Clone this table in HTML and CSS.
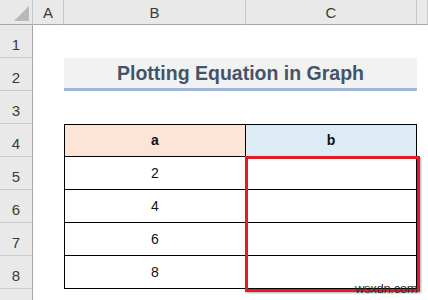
FILE: index.html
```html
<!DOCTYPE html>
<html lang="en">
<head>
    <meta charset="UTF-8">
    <title>Plotting Equation in Graph</title>
    <link rel="stylesheet" href="styles.css">
</head>
<body>
    <div class="sheet">
        <!-- column headers -->
        <div class="corner"><span class="corner-mark"></span></div>
        <div class="col-head">A</div>
        <div class="col-head">B</div>
        <div class="col-head">C</div>
        <div class="col-head"></div>

        <!-- row 1 -->
        <div class="row-head">1</div>
        <div class="cell"></div><div class="cell"></div><div class="cell"></div><div class="cell"></div>

        <!-- row 2: title merged over B:C -->
        <div class="row-head">2</div>
        <div class="cell"></div>
        <div class="title">Plotting Equation in Graph</div>
        <div class="cell"></div>

        <!-- row 3 -->
        <div class="row-head">3</div>
        <div class="cell"></div><div class="cell"></div><div class="cell"></div><div class="cell"></div>

        <!-- row 4: table header -->
        <div class="row-head">4</div>
        <div class="cell"></div>
        <div class="cell tbl tbl-first tbl-top head-a">a</div>
        <div class="cell tbl tbl-top head-b">b</div>
        <div class="cell"></div>

        <div class="row-head">5</div>
        <div class="cell"></div>
        <div class="cell tbl tbl-first">2</div>
        <div class="cell tbl"></div>
        <div class="cell"></div>

        <div class="row-head">6</div>
        <div class="cell"></div>
        <div class="cell tbl tbl-first">4</div>
        <div class="cell tbl"></div>
        <div class="cell"></div>

        <div class="row-head">7</div>
        <div class="cell"></div>
        <div class="cell tbl tbl-first">6</div>
        <div class="cell tbl"></div>
        <div class="cell"></div>

        <div class="row-head">8</div>
        <div class="cell"></div>
        <div class="cell tbl tbl-first">8</div>
        <div class="cell tbl"></div>
        <div class="cell"></div>

        <div class="row-head"></div>
        <div class="cell"></div><div class="cell"></div><div class="cell"></div><div class="cell"></div>

        <!-- highlight over C5:C8 -->
        <div class="highlight"></div>
        <div class="watermark">wsxdn.com</div>
    </div>
</body>
</html>
```

FILE: styles.css
```css
body {
    margin: 0;
    background: #fff;
    font-family: "Liberation Sans", Arial, sans-serif;
}

/* Sheet grid */
.sheet {
    position: relative;
    display: grid;
    grid-template-columns: 33px 31px 182px 171px 11px;
    grid-template-rows: 25px repeat(9, 33px);
    width: 428px;
    height: 300px;
    overflow: hidden;
}

.corner {
    position: relative;
    background: #e9e9e9;
    border-right: 1px solid #c9c9c9;
    border-bottom: 1px solid #a6a6a6;
}

.corner-mark {
    position: absolute;
    right: 3px;
    bottom: 3px;
    width: 0;
    height: 0;
    border-left: 15px solid transparent;
    border-bottom: 15px solid #b8b8b8;
}

.col-head {
    display: flex;
    align-items: center;
    justify-content: center;
    background: #e9e9e9;
    border-right: 1px solid #c9c9c9;
    border-bottom: 1px solid #a6a6a6;
    color: #3b3b3b;
    font-size: 15px;
}

.row-head {
    display: flex;
    align-items: flex-end;
    justify-content: center;
    padding-bottom: 4px;
    background: #e9e9e9;
    border-right: 1px solid #a6a6a6;
    border-bottom: 1px solid #c9c9c9;
    color: #3b3b3b;
    font-size: 15px;
}

.cell {
    display: flex;
    align-items: flex-end;
    justify-content: center;
    padding-bottom: 8px;
    font-size: 14px;
    color: #111;
}

/* Title merged over B:C */
.title {
    grid-column: span 2;
    display: flex;
    align-items: center;
    justify-content: center;
    padding-top: 1px;
    background: #f2f2f2;
    border-bottom: 3px solid #a2b4d8;
    color: #44546a;
    font-size: 19.5px;
    font-weight: bold;
}

/* Data table */
.tbl {
    border-right: 1px solid #000;
    border-bottom: 1px solid #000;
}

.tbl-first {
    border-left: 1px solid #000;
}

.tbl-top {
    border-top: 1px solid #000;
    font-weight: bold;
}

.head-a {
    background: #fce4d6;
}

.head-b {
    background: #ddebf7;
}

.highlight {
    position: absolute;
    left: 245px;
    top: 156px;
    width: 169px;
    height: 130px;
    border: 3px solid #e31b23;
    box-shadow: 1px 1px 2px rgba(0, 0, 0, 0.35);
}

.watermark {
    position: absolute;
    left: 355px;
    top: 281px;
    font-size: 13px;
    color: #333;
    letter-spacing: -0.3px;
}
```
